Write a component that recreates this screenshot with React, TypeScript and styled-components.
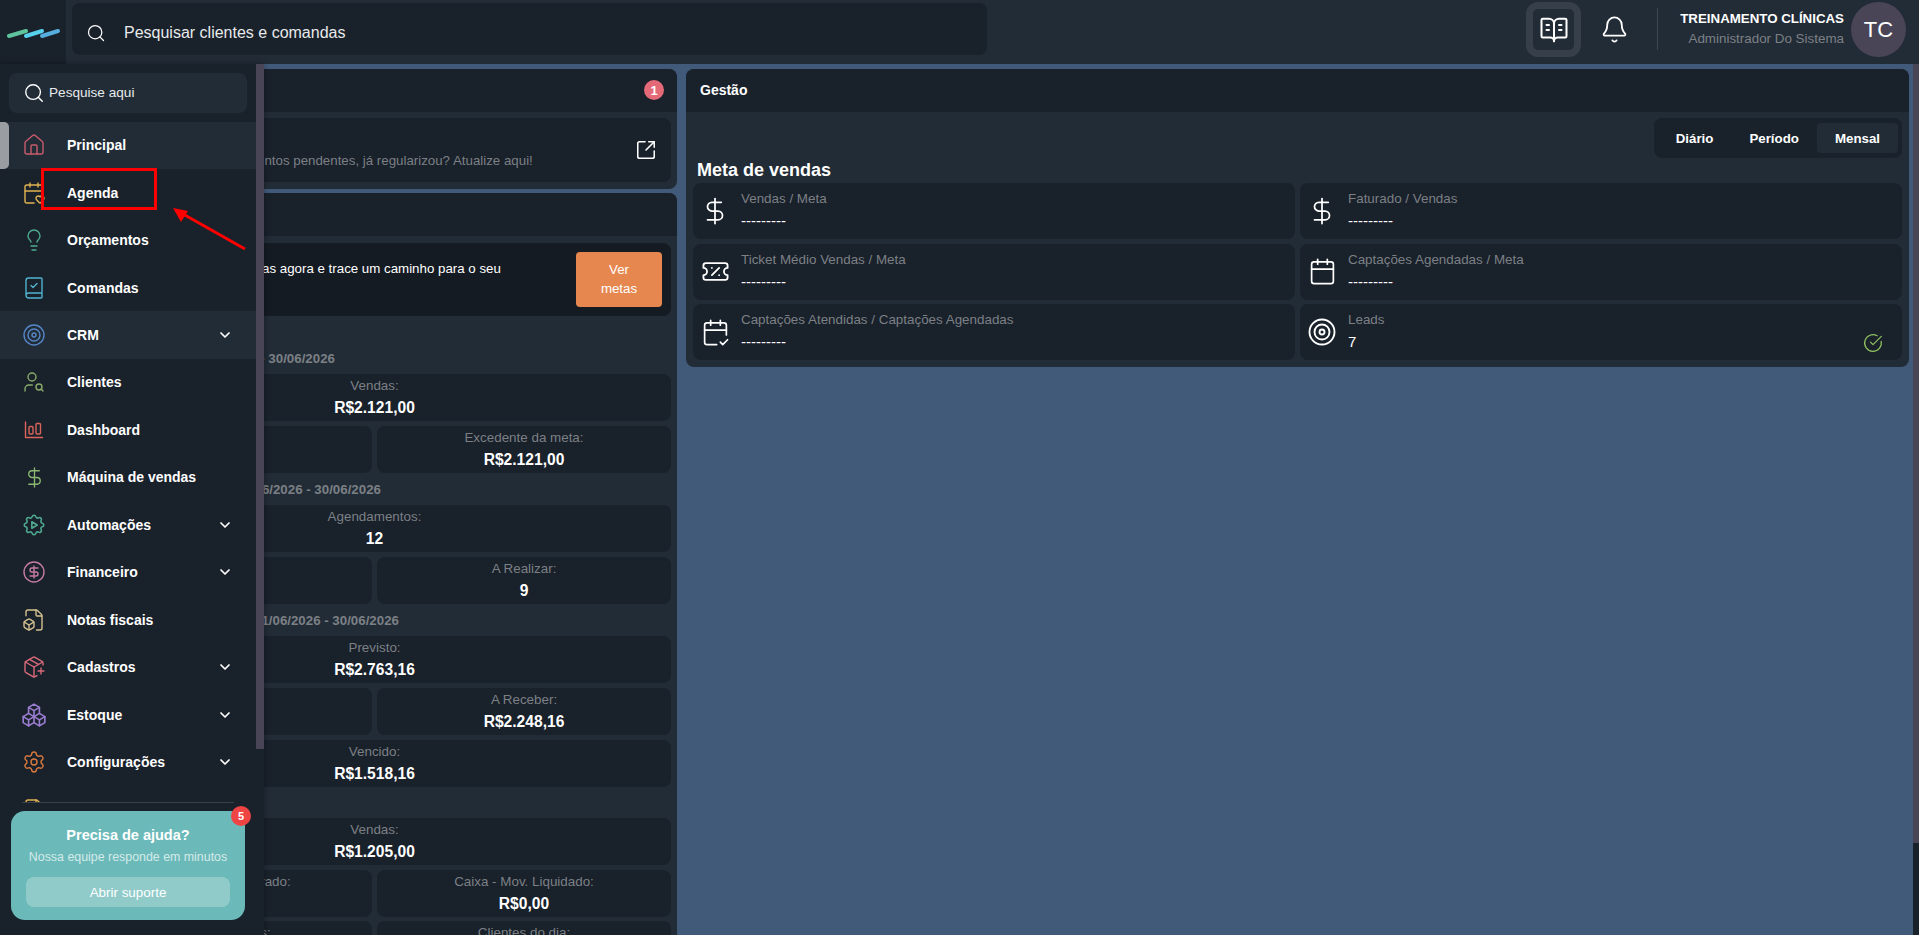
import React from "react";
import styled, { createGlobalStyle } from "styled-components";
import {
  Search, House, CalendarHeart, Lightbulb, BookCheck, Target, UserSearch, DollarSign, CircleDollarSign,
  FileBox, PackagePlus, Settings, ChevronDown, BookOpenText, Bell, SquareArrowOutUpRight, TicketPercent,
  Calendar, CalendarCheck2, CircleCheckBig, FileText,
} from "lucide-react";
import { TbSettingsAutomation, TbPackages } from "react-icons/tb";

const FONT = `"Liberation Sans", Arial, sans-serif`;
const DARK = "#19212b";
const PANEL = "#222c37";
const GRAY = "#7c8085";
const THUMB = "#4a4556";

const Global = createGlobalStyle`
  html, body { margin: 0; padding: 0; height: 100%; overflow: hidden; background: #415a7a; font-family: ${FONT}; color: #fff; }
  * { box-sizing: border-box; }
`;

const Shell = styled.div`
  position: relative;
  height: 100vh;
  display: flex;
  flex-direction: column;
`;

const Topbar = styled.header`
  height: 64px;
  flex: none;
  display: flex;
  align-items: flex-start;
  background: ${PANEL};
`;
const LogoBox = styled.div`
  width: 66px;
  height: 64px;
  flex: none;
  background: ${DARK};
  display: flex;
  align-items: center;
  padding: 2px 0 0 7px;
`;
const TopSearch = styled.div`
  margin: 3px 0 0 6px;
  width: 915px;
  height: 52px;
  border-radius: 8px;
  background: ${DARK};
  display: flex;
  align-items: center;
  padding: 8px 0 0 14px;
  gap: 18px;
  font-size: 16px;
  color: #e8eaec;
`;
const TopRight = styled.div`
  margin-left: auto;
  display: flex;
  align-items: flex-start;
  padding: 2px 13px 0 0;
`;
const BookButton = styled.div`
  width: 55px;
  height: 55px;
  border: 7px solid #363f4a;
  border-radius: 12px;
  background: ${PANEL};
  display: flex;
  align-items: center;
  justify-content: center;
`;
const BellBox = styled.div`
  width: 30px;
  height: 55px;
  margin-left: 18px;
  display: flex;
  align-items: center;
  justify-content: center;
`;
const VDivider = styled.div`
  width: 1px;
  height: 42px;
  margin: 6px 0 0 28px;
  background: #3c4651;
`;
const UserInfo = styled.div`
  margin-left: 21px;
  width: 165px;
  text-align: right;
  padding-top: 9px;
`;
const UserName = styled.div`
  font-size: 13.3px;
  font-weight: 700;
  line-height: 16px;
  white-space: nowrap;
`;
const UserRole = styled.div`
  font-size: 13.4px;
  line-height: 16px;
  margin-top: 4px;
  color: ${GRAY};
  white-space: nowrap;
`;
const Avatar = styled.div`
  width: 55px;
  height: 55px;
  border-radius: 50%;
  margin-left: 7px;
  background: ${THUMB};
  display: flex;
  align-items: center;
  justify-content: center;
  font-size: 22px;
`;

const Body = styled.div`
  flex: 1;
  min-height: 0;
  display: flex;
`;
const Main = styled.main`
  flex: 1;
  min-width: 0;
  overflow: hidden;
  background: #415a7a;
`;
const Content = styled.div`
  min-height: 974px;
  padding: 5px 4px 0 72px;
  display: grid;
  grid-template-columns: 605px minmax(0, 1fr);
  column-gap: 9px;
  align-items: start;
`;
const Rail = styled.div<{ $width: number }>`
  width: ${(p) => p.$width}px;
  flex: none;
  background: ${DARK};
`;
const Thumb = styled.div<{ $height: number }>`
  height: ${(p) => p.$height}px;
  background: ${THUMB};
`;
const Column = styled.div`
  display: flex;
  flex-direction: column;
  gap: 4px;
`;
const Card = styled.section`
  background: ${PANEL};
  border-radius: 8px;
  overflow: hidden;
`;
const CardHeader = styled.div`
  height: 43px;
  background: ${DARK};
  display: flex;
  align-items: center;
  padding: 0 13px 1px 14px;
  font-size: 14px;
  font-weight: 700;
`;
const CountBadge = styled.span`
  margin-left: auto;
  width: 20px;
  height: 20px;
  border-radius: 50%;
  background: #e56a78;
  display: flex;
  align-items: center;
  justify-content: center;
  font-size: 13px;
  font-weight: 700;
`;
const CardBody = styled.div`
  padding: 6px 6px 7px;
`;
const Notice = styled.div`
  height: 64px;
  background: ${DARK};
  border-radius: 8px;
  display: flex;
  align-items: center;
  padding: 0 14px 0 63px;
`;
const NoticeText = styled.div`
  flex: 1;
  font-size: 13.3px;
`;
const NoticeTitle = styled.div`
  font-weight: 700;
  line-height: 20px;
  margin-bottom: 2px;
`;
const NoticeSub = styled.div`
  color: ${GRAY};
  line-height: 20px;
`;
const GoalBanner = styled.div`
  height: 73px;
  background: #151b23;
  border-radius: 8px;
  display: flex;
  align-items: center;
  padding: 0 9px 0 88px;
  margin-top: 1px;
`;
const GoalText = styled.div`
  width: 345px;
  font-size: 13.3px;
  line-height: 20px;
  margin-top: -1px;
`;
const GoalButton = styled.div`
  margin-left: auto;
  width: 86px;
  height: 55px;
  border-radius: 4px;
  background: #e5874f;
  display: flex;
  align-items: center;
  justify-content: center;
  text-align: center;
  font-size: 13.3px;
  line-height: 19px;
  padding: 0 20px 2px;
`;
const SectionTitle = styled.div<{ $top?: number; $pad?: number }>`
  height: 32px;
  margin-top: ${(p) => p.$top ?? 0}px;
  padding-left: ${(p) => p.$pad ?? 0}px;
  display: flex;
  align-items: center;
  white-space: nowrap;
  font-size: 13.3px;
  font-weight: 700;
  color: ${GRAY};
`;
const StatGrid = styled.div<{ $gap?: number }>`
  display: grid;
  grid-template-columns: 1fr 1fr;
  gap: ${(p) => p.$gap ?? 5}px 5px;
`;
const Stat = styled.div<{ $wide?: boolean }>`
  grid-column: ${(p) => (p.$wide ? "1 / -1" : "auto")};
  height: 47px;
  padding-top: 4px;
  background: ${DARK};
  border-radius: 8px;
  text-align: center;
`;
const StatLabel = styled.div`
  font-size: 13.4px;
  line-height: 16px;
  color: ${GRAY};
`;
const StatValue = styled.div`
  font-size: 15.6px;
  font-weight: 700;
  line-height: 20px;
  margin-top: 4px;
`;

const TabsRow = styled.div`
  display: flex;
  justify-content: flex-end;
  padding-right: 1px;
`;
const Tabs = styled.div`
  height: 40px;
  padding: 5px 4px;
  display: flex;
  background: ${DARK};
  border-radius: 8px;
`;
const Tab = styled.div<{ $active?: boolean }>`
  padding: 0 18px;
  display: flex;
  align-items: center;
  font-size: 13.3px;
  font-weight: 700;
  border-radius: 4px;
  background: ${(p) => (p.$active ? PANEL : "transparent")};
`;
const MetaTitle = styled.h2`
  margin: 1px 0 0 5px;
  height: 22px;
  font-size: 18px;
  line-height: 22px;
  font-weight: 700;
`;
const MetricGrid = styled.div`
  margin-top: 2px;
  display: grid;
  grid-template-columns: 1fr 1fr;
  grid-auto-rows: 56px;
  gap: 4.5px 5px;
  padding: 0 1px;
`;
const Metric = styled.div`
  background: ${DARK};
  border-radius: 8px;
  display: flex;
  align-items: center;
  padding-right: 19px;
`;
const MetricIcon = styled.div`
  width: 48px;
  flex: none;
  display: flex;
  justify-content: center;
  padding-right: 4px;
  color: #fff;
`;
const MetricText = styled.div`
  align-self: flex-start;
  padding-top: 8px;
`;
const MetricLabel = styled.div`
  font-size: 13.4px;
  line-height: 16px;
  color: ${GRAY};
`;
const MetricValue = styled.div`
  font-size: 15px;
  line-height: 20px;
  margin-top: 4px;
`;
const MetricCheck = styled.div`
  margin-left: auto;
  align-self: flex-end;
  padding-bottom: 7px;
  line-height: 0;
  color: #8fbf5f;
`;

const Sidebar = styled.aside`
  position: absolute;
  top: 64px;
  left: 0;
  bottom: 0;
  width: 264px;
  z-index: 5;
  display: flex;
  background: ${DARK};
  box-shadow: 0 0 6px rgba(0, 0, 0, 0.35);
`;
const SideScroll = styled.div`
  width: 256px;
  flex: none;
  height: 100%;
  overflow: hidden;
`;
const SideInner = styled.div`
  min-height: 1107px;
  padding-top: 9px;
`;
const SideSearch = styled.div`
  margin: 0 9px 8.5px;
  height: 40px;
  border-radius: 8px;
  background: ${PANEL};
  display: flex;
  align-items: center;
  padding-left: 14px;
  gap: 4px;
  font-size: 13.6px;
  color: #e8eaec;
`;
const SideSearchText = styled.span`
  padding-bottom: 2px;
`;
const MenuItem = styled.div<{ $on?: boolean; $open?: boolean }>`
  position: relative;
  height: 47.46px;
  display: flex;
  align-items: center;
  padding-left: 23px;
  background: ${(p) => (p.$on || p.$open ? PANEL : "transparent")};
  font-size: 14px;
  font-weight: 700;
  &::before {
    content: "";
    display: ${(p) => (p.$on ? "block" : "none")};
    position: absolute;
    left: 0;
    top: 0;
    bottom: 0;
    width: 9px;
    background: #9a9ea3;
    border-radius: 0 5px 5px 0;
  }
`;
const MenuIcon = styled.span<{ $color: string }>`
  width: 22px;
  height: 22px;
  flex: none;
  color: ${(p) => p.$color};
  display: flex;
  align-items: center;
  justify-content: center;
  margin-right: 22px;
  & > svg { flex: none; }
`;
const MenuLabel = styled.span`
  flex: 1;
`;
const MenuChevron = styled.span`
  width: 16px;
  margin-right: 23px;
  display: flex;
  justify-content: center;
`;
const HelpDock = styled.div`
  position: absolute;
  left: 0;
  bottom: 0;
  width: 256px;
  height: 133px;
  background: ${DARK};
  padding: 0 11px;
  &::before {
    content: "";
    position: absolute;
    top: 0;
    left: 22px;
    right: 22px;
    height: 1px;
    background: #3a4048;
  }
`;
const HelpCard = styled.div`
  position: relative;
  margin-top: 9px;
  height: 109px;
  border-radius: 14px;
  background: #6bbab9;
  padding: 14px 15px 0;
  text-align: center;
`;
const HelpTitle = styled.div`
  font-size: 14.5px;
  font-weight: 700;
  line-height: 20px;
`;
const HelpSub = styled.div`
  font-size: 12.4px;
  line-height: 16px;
  margin-top: 4px;
  white-space: nowrap;
  color: rgba(255, 255, 255, 0.72);
`;
const HelpButton = styled.div`
  height: 30px;
  margin-top: 12px;
  border-radius: 8px;
  background: rgba(255, 255, 255, 0.25);
  display: flex;
  align-items: center;
  justify-content: center;
  font-size: 13.4px;
`;
const HelpBadge = styled.span`
  position: absolute;
  top: -5px;
  right: -6px;
  width: 20px;
  height: 20px;
  border-radius: 50%;
  background: #ef4444;
  display: flex;
  align-items: center;
  justify-content: center;
  font-size: 11px;
  font-weight: 700;
`;

const MarkBox = styled.div`
  position: absolute;
  left: 41px;
  top: 168px;
  width: 116px;
  height: 42px;
  border: 3px solid #fe0000;
  z-index: 8;
`;
const MarkArrow = styled.svg`
  position: absolute;
  left: 165px;
  top: 200px;
  width: 90px;
  height: 60px;
  z-index: 8;
`;

const LogoMark = () => (
  <svg width="54" height="12" viewBox="0 0 54 12" fill="none" strokeWidth="4" strokeLinecap="round">
    <path d="M2 9 L19 4" stroke="#5fc49c" />
    <path d="M19 9 L35 4" stroke="#57d0ee" />
    <path d="M35 9 L51 4" stroke="#55aedd" />
  </svg>
);
const BarsIcon = () => (
  <svg width="22" height="22" viewBox="0 0 22 22" fill="none" stroke="currentColor" strokeWidth="1.4" strokeLinecap="round" strokeLinejoin="round">
    <path d="M2.5 3v15.5h17" />
    <rect x="6" y="7.5" width="4" height="7.5" rx="1" />
    <rect x="13" y="4.5" width="4.5" height="10.5" rx="1" />
  </svg>
);

const icon = { size: 24, strokeWidth: 1.4 };
const menu: { label: string; color: string; node: React.ReactNode; chevron?: boolean; on?: boolean; open?: boolean }[] = [
  { label: "Principal", color: "#c75b6b", node: <House {...icon} />, on: true },
  { label: "Agenda", color: "#e0b252", node: <CalendarHeart {...icon} /> },
  { label: "Orçamentos", color: "#4ea98e", node: <Lightbulb {...icon} /> },
  { label: "Comandas", color: "#4fb2ce", node: <BookCheck {...icon} /> },
  { label: "CRM", color: "#5586c6", node: <Target {...icon} />, chevron: true, open: true },
  { label: "Clientes", color: "#8aab6a", node: <UserSearch {...icon} /> },
  { label: "Dashboard", color: "#d9655a", node: <BarsIcon /> },
  { label: "Máquina de vendas", color: "#8cb872", node: <DollarSign size={23} strokeWidth={1.4} /> },
  { label: "Automações", color: "#4ea98e", node: <TbSettingsAutomation size={26} strokeWidth={1.5} />, chevron: true },
  { label: "Financeiro", color: "#c47ba2", node: <CircleDollarSign {...icon} />, chevron: true },
  { label: "Notas fiscais", color: "#d3c190", node: <FileBox {...icon} /> },
  { label: "Cadastros", color: "#d96a7a", node: <PackagePlus {...icon} />, chevron: true },
  { label: "Estoque", color: "#9a7dd0", node: <TbPackages size={26} strokeWidth={1.5} />, chevron: true },
  { label: "Configurações", color: "#d97a3f", node: <Settings {...icon} />, chevron: true },
  { label: "Relatórios", color: "#e0b252", node: <FileText {...icon} /> },
];

type S = { l: string; v: string; wide?: boolean };
const RANGE = "01/06/2026 - 30/06/2026";
const sections: { id: string; title: string; top?: number; pad?: number; gap?: number; stats: S[] }[] = [
  {
    id: "vendas",
    title: RANGE,
    top: 26,
    pad: 112,
    stats: [
      { l: "Vendas:", v: "R$2.121,00", wide: true },
      { l: "Meta:", v: "R$0,00" },
      { l: "Excedente da meta:", v: "R$2.121,00" },
    ],
  },
  {
    id: "agenda",
    title: RANGE,
    pad: 158,
    stats: [
      { l: "Agendamentos:", v: "12", wide: true },
      { l: "Realizados:", v: "3" },
      { l: "A Realizar:", v: "9" },
    ],
  },
  {
    id: "receber",
    title: RANGE,
    pad: 176,
    stats: [
      { l: "Previsto:", v: "R$2.763,16", wide: true },
      { l: "Recebido:", v: "R$515,00" },
      { l: "A Receber:", v: "R$2.248,16" },
      { l: "Vencido:", v: "R$1.518,16", wide: true },
    ],
  },
  {
    id: "caixa",
    title: "",
    top: -1,
    gap: 4.5,
    stats: [
      { l: "Vendas:", v: "R$1.205,00", wide: true },
      { l: "Caixa - Mov. Apurado:", v: "R$0,00" },
      { l: "Caixa - Mov. Liquidado:", v: "R$0,00" },
      { l: "Clientes novos:", v: "0" },
      { l: "Clientes do dia:", v: "0" },
    ],
  },
];

const metrics: { l: string; v: string; node: React.ReactNode; check?: boolean }[] = [
  { l: "Vendas / Meta", v: "---------", node: <DollarSign size={30} strokeWidth={1.4} /> },
  { l: "Faturado / Vendas", v: "---------", node: <DollarSign size={30} strokeWidth={1.4} /> },
  { l: "Ticket Médio Vendas / Meta", v: "---------", node: <TicketPercent size={29} strokeWidth={1.5} /> },
  { l: "Captações Agendadas / Meta", v: "---------", node: <Calendar size={29} strokeWidth={1.4} /> },
  { l: "Captações Atendidas / Captações Agendadas", v: "---------", node: <CalendarCheck2 size={29} strokeWidth={1.4} /> },
  { l: "Leads", v: "7", node: <Target size={30} strokeWidth={1.5} />, check: true },
];

export default function App() {
  return (
    <Shell>
      <Global />
      <Topbar>
        <LogoBox><LogoMark /></LogoBox>
        <TopSearch>
          <Search size={20} strokeWidth={1.5} color="#fff" />
          Pesquisar clientes e comandas
        </TopSearch>
        <TopRight>
          <BookButton><BookOpenText size={30} strokeWidth={1.6} /></BookButton>
          <BellBox><Bell size={29} strokeWidth={1.5} /></BellBox>
          <VDivider />
          <UserInfo>
            <UserName>TREINAMENTO CLÍNICAS</UserName>
            <UserRole>Administrador Do Sistema</UserRole>
          </UserInfo>
          <Avatar>TC</Avatar>
        </TopRight>
      </Topbar>

      <Body>
        <Main>
          <Content>
            <Column>
              <Card>
                <CardHeader>
                  <CountBadge>1</CountBadge>
                </CardHeader>
                <CardBody>
                  <Notice>
                    <NoticeText>
                      <NoticeTitle>Financeiro</NoticeTitle>
                      <NoticeSub>Você possui pagamentos pendentes, já regularizou? Atualize aqui!</NoticeSub>
                    </NoticeText>
                    <SquareArrowOutUpRight size={22} strokeWidth={1.7} />
                  </Notice>
                </CardBody>
              </Card>
              <Card>
                <CardHeader />
                <CardBody>
                  <GoalBanner>
                    <GoalText>Defina suas metas agora e trace um caminho para o seu objetivo</GoalText>
                    <GoalButton>Ver metas</GoalButton>
                  </GoalBanner>
                  {sections.map((s) => (
                    <React.Fragment key={s.id}>
                      <SectionTitle $top={s.top} $pad={s.pad}>{s.title}</SectionTitle>
                      <StatGrid $gap={s.gap}>
                        {s.stats.map((st) => (
                          <Stat key={st.l} $wide={st.wide}>
                            <StatLabel>{st.l}</StatLabel>
                            <StatValue>{st.v}</StatValue>
                          </Stat>
                        ))}
                      </StatGrid>
                    </React.Fragment>
                  ))}
                </CardBody>
              </Card>
            </Column>

            <Card>
              <CardHeader>Gestão</CardHeader>
              <CardBody>
                <TabsRow>
                  <Tabs>
                    <Tab>Diário</Tab>
                    <Tab>Período</Tab>
                    <Tab $active>Mensal</Tab>
                  </Tabs>
                </TabsRow>
                <MetaTitle>Meta de vendas</MetaTitle>
                <MetricGrid>
                  {metrics.map((m) => (
                    <Metric key={m.l}>
                      <MetricIcon>{m.node}</MetricIcon>
                      <MetricText>
                        <MetricLabel>{m.l}</MetricLabel>
                        <MetricValue>{m.v}</MetricValue>
                      </MetricText>
                      {m.check && <MetricCheck><CircleCheckBig size={20} strokeWidth={1.5} /></MetricCheck>}
                    </Metric>
                  ))}
                </MetricGrid>
              </CardBody>
            </Card>
          </Content>
        </Main>
        <Rail $width={6}><Thumb $height={779} /></Rail>
      </Body>

      <Sidebar>
        <SideScroll>
          <SideInner>
            <SideSearch>
              <Search size={22} strokeWidth={1.5} color="#fff" />
              <SideSearchText>Pesquise aqui</SideSearchText>
            </SideSearch>
            {menu.map((m) => (
              <MenuItem key={m.label} $on={m.on} $open={m.open}>
                <MenuIcon $color={m.color}>{m.node}</MenuIcon>
                <MenuLabel>{m.label}</MenuLabel>
                {m.chevron && <MenuChevron><ChevronDown size={18} strokeWidth={2.6} /></MenuChevron>}
              </MenuItem>
            ))}
          </SideInner>
        </SideScroll>
        <Rail $width={8}><Thumb $height={685} /></Rail>
        <HelpDock>
          <HelpCard>
            <HelpBadge>5</HelpBadge>
            <HelpTitle>Precisa de ajuda?</HelpTitle>
            <HelpSub>Nossa equipe responde em minutos</HelpSub>
            <HelpButton>Abrir suporte</HelpButton>
          </HelpCard>
        </HelpDock>
      </Sidebar>

      <MarkBox />
      <MarkArrow viewBox="0 0 90 60" fill="none">
        <path d="M80 49 L18 14" stroke="#fe0000" strokeWidth="3" />
        <path d="M8 8 L23 11 L16 22 Z" fill="#fe0000" />
      </MarkArrow>
    </Shell>
  );
}
